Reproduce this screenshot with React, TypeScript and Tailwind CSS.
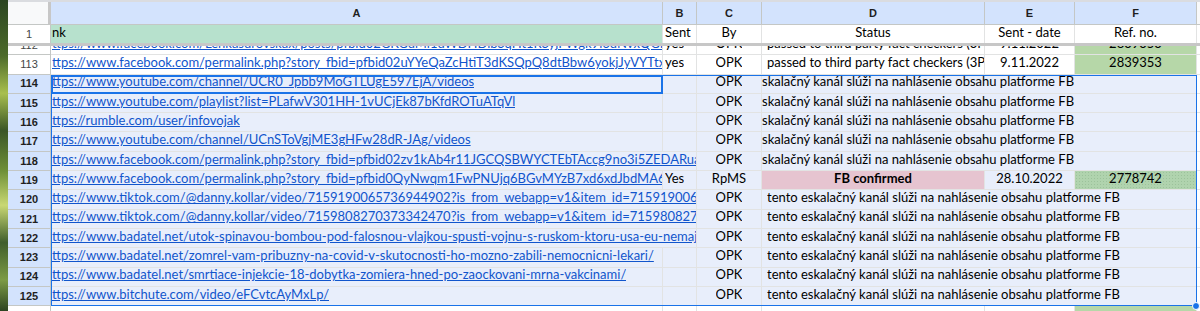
import React from "react";

type Row = {
  n: number;
  a?: string;
  aSpan?: boolean; // link text runs on into the empty B cell
  b?: string;
  c?: string;
  d?: string;
  dSpan?: boolean; // status text runs on over E and F
  dStyle?: "pink";
  e?: string;
  f?: string;
  fGreen?: boolean;
};

const GRID =
  "grid grid-cols-[43px_612px_34px_65px_223px_90px_122px_1fr]";
const CELL =
  "border-r border-b border-[#e2e3e3] overflow-hidden whitespace-nowrap flex items-end pb-[1px] text-[13px] text-black font-['Lato','Liberation_Sans',sans-serif]";
const LINK = "text-[#1155cc] underline";

const FB = "skalačný kanál slúži na nahlásenie obsahu platforme FB";
const FB_FULL = "tento eskalačný kanál slúži na nahlásenie obsahu platforme FB";

// text that gets clipped by its cell, like a sheet does
function Txt({ children, className = "" }: { children?: React.ReactNode; className?: string }) {
  if (!children) return null;
  return <span className={`min-w-0 overflow-hidden ${className}`}>{children}</span>;
}

const rows: Row[] = [
  {
    n: 112,
    a: "ttps://www.facebook.com/Lenkasurovskax/posts/pfbid02GKGuMi1uWDHDibSqHt1RSyjFWgk9i6uNvxQGHB/",
    b: "yes",
    c: "OPK",
    d: "passed to third party fact checkers (3P",
    e: "9.11.2022",
    f: "2839353",
    fGreen: true,
  },
  {
    n: 113,
    a: "ttps://www.facebook.com/permalink.php?story_fbid=pfbid02uYYeQaZcHtiT3dKSQpQ8dtBbw6yokjJyVYTtx",
    b: "yes",
    c: "OPK",
    d: "passed to third party fact checkers (3P",
    e: "9.11.2022",
    f: "2839353",
    fGreen: true,
  },
];

const selected: Row[] = [
  { n: 114, a: "ttps://www.youtube.com/channel/UCR0_Jpbb9MoGTLUgE597EjA/videos", c: "OPK", d: FB, dSpan: true },
  { n: 115, a: "ttps://www.youtube.com/playlist?list=PLafwV301HH-1vUCjEk87bKfdROTuATqVl", c: "OPK", d: FB, dSpan: true },
  { n: 116, a: "ttps://rumble.com/user/infovojak", c: "OPK", d: FB, dSpan: true },
  { n: 117, a: "ttps://www.youtube.com/channel/UCnSToVgjME3gHFw28dR-JAg/videos", c: "OPK", d: FB, dSpan: true },
  {
    n: 118,
    a: "ttps://www.facebook.com/permalink.php?story_fbid=pfbid02zv1kAb4r11JGCQSBWYCTEbTAccg9no3i5ZEDARuak",
    aSpan: true,
    c: "OPK",
    d: FB,
    dSpan: true,
  },
  {
    n: 119,
    a: "ttps://www.facebook.com/permalink.php?story_fbid=pfbid0QyNwqm1FwPNUjq6BGvMYzB7xd6xdJbdMA6",
    b: "Yes",
    c: "RpMS",
    d: "FB confirmed",
    dStyle: "pink",
    e: "28.10.2022",
    f: "2778742",
    fGreen: true,
  },
  {
    n: 120,
    a: "ttps://www.tiktok.com/@danny.kollar/video/7159190065736944902?is_from_webapp=v1&item_id=7159190065736944902",
    aSpan: true,
    c: "OPK",
    d: FB_FULL,
    dSpan: true,
  },
  {
    n: 121,
    a: "ttps://www.tiktok.com/@danny.kollar/video/7159808270373342470?is_from_webapp=v1&item_id=7159808270373342470",
    aSpan: true,
    c: "OPK",
    d: FB_FULL,
    dSpan: true,
  },
  {
    n: 122,
    a: "ttps://www.badatel.net/utok-spinavou-bombou-pod-falosnou-vlajkou-spusti-vojnu-s-ruskom-ktoru-usa-eu-nemaju/",
    aSpan: true,
    c: "OPK",
    d: FB_FULL,
    dSpan: true,
  },
  {
    n: 123,
    a: "ttps://www.badatel.net/zomrel-vam-pribuzny-na-covid-v-skutocnosti-ho-mozno-zabili-nemocnicni-lekari/",
    c: "OPK",
    d: FB_FULL,
    dSpan: true,
  },
  {
    n: 124,
    a: "ttps://www.badatel.net/smrtiace-injekcie-18-dobytka-zomiera-hned-po-zaockovani-mrna-vakcinami/",
    c: "OPK",
    d: FB_FULL,
    dSpan: true,
  },
  { n: 125, a: "ttps://www.bitchute.com/video/eFCvtcAyMxLp/", c: "OPK", d: FB_FULL, dSpan: true },
];

function SheetRow({ row, sel }: { row: Row; sel?: boolean }) {
  const bg = sel ? "bg-[#e8eefb]" : "bg-white";
  return (
    <div className={`${GRID} h-[19.3px]`}>
      <div
        className={`border-r border-b border-[#c4c7c5] flex items-center justify-center text-[11px] font-['Liberation_Sans',sans-serif] ${
          sel ? "bg-[#d3e3fd] font-bold text-[#1f1f1f]" : "bg-white text-[#444746]"
        }`}
      >
        {row.n}
      </div>
      <div className={`${CELL} ${bg} ${row.aSpan ? "col-span-2" : ""} pl-[1px]`}>
        <Txt className={LINK}>{row.a}</Txt>
      </div>
      {!row.aSpan && (
        <div className={`${CELL} ${bg} pl-[2px]`}>
          <Txt>{row.b}</Txt>
        </div>
      )}
      <div className={`${CELL} ${bg} justify-center`}>
        <Txt>{row.c}</Txt>
      </div>
      {row.dSpan ? (
        <div className={`${CELL} ${bg} col-span-3 ${row.d === FB ? "pl-0" : "pl-[5px]"}`}>
          <Txt>{row.d}</Txt>
        </div>
      ) : (
        <>
          <div
            className={`${CELL} ${
              row.dStyle === "pink" ? "bg-[#e6c4d0] justify-center font-bold" : `${bg} pl-[5px]`
            }`}
          >
            <Txt>{row.d}</Txt>
          </div>
          <div className={`${CELL} ${bg} justify-center`}>
            <Txt>{row.e}</Txt>
          </div>
          <div
            className={`${CELL} justify-center ${
              row.fGreen
                ? sel
                  ? "bg-[#b0d3ae] bg-[radial-gradient(#9cc29b_0.6px,transparent_0.7px)] bg-[length:3px_3px]"
                  : "bg-[#b6d7a8]"
                : bg
            }`}
          >
            <Txt>{row.f}</Txt>
          </div>
        </>
      )}
      <div className="border-b border-[#e2e3e3] bg-white" />
    </div>
  );
}

export default function App() {
  return (
    <div className="flex h-[311px] w-[1200px] overflow-hidden bg-white">
      {/* desktop wallpaper peeking out on the left */}
      <div className="w-[8px] flex-none bg-[linear-gradient(180deg,#2b4521_0%,#4d6b2a_18%,#a8bf4e_30%,#3a5626_42%,#6f9038_55%,#c9d873_66%,#3f5e2b_78%,#7c9b45_90%,#2c4422_100%)]" />

      <div className="flex-1 flex flex-col">
        {/* column letters */}
        <div className={`${GRID} h-[25px] border-t-2 border-[#dadce0] flex-none`}>
          <div className="bg-[#f8f9fa] border-b border-[#c4c7c5] border-r-[3px] border-r-[#c7c7c7]" />
          {["A", "B", "C", "D", "E", "F"].map((l) => (
            <div
              key={l}
              className="bg-[#d3e3fd] border-r border-b border-[#c4c7c5] flex items-center justify-center text-[11px] font-bold text-[#1f1f1f] font-['Liberation_Sans',sans-serif]"
            >
              {l}
            </div>
          ))}
          <div className="bg-[#f8f9fa] border-b border-[#c4c7c5]" />
        </div>

        {/* frozen header row */}
        <div className={`${GRID} h-[18px] flex-none`}>
          <div className="bg-white border-r border-[#c4c7c5] flex items-center justify-center text-[11px] text-[#444746] font-['Liberation_Sans',sans-serif]">
            1
          </div>
          <div className={`${CELL} bg-[#b7e1cd] pl-[1px] border-b-0`}>nk</div>
          <div className={`${CELL} bg-white pl-[2px] border-b-0`}>
            <Txt>Sent</Txt>
          </div>
          <div className={`${CELL} bg-white justify-center border-b-0`}>By</div>
          <div className={`${CELL} bg-white justify-center border-b-0`}>Status</div>
          <div className={`${CELL} bg-white justify-center border-b-0`}>Sent - date</div>
          <div className={`${CELL} bg-white justify-center border-b-0`}>Ref. no.</div>
          <div className="bg-white" />
        </div>
        <div className="h-[3px] flex-none bg-[#c7c7c7]" />

        {/* scrolled body */}
        <div className="flex-1 overflow-hidden">
          <div className="-mt-[10px]">
            {rows.map((r) => (
              <SheetRow key={r.n} row={r} />
            ))}
            <div className="relative">
              {selected.map((r) => (
                <SheetRow key={r.n} row={r} sel />
              ))}
              {/* selection range + active cell */}
              <div className="absolute inset-y-0 left-[43px] right-[3px] border border-[#1a73e8] pointer-events-none" />
              <div className="absolute top-0 left-[43px] w-[612px] h-[19.3px] border-2 border-[#1a73e8] pointer-events-none" />
              <div className="absolute -bottom-[4px] right-0 w-[8px] h-[8px] rounded-full bg-[#1a73e8] border border-white" />
            </div>
            <SheetRow row={{ n: 126, fGreen: true }} />
          </div>
        </div>
      </div>
    </div>
  );
}
